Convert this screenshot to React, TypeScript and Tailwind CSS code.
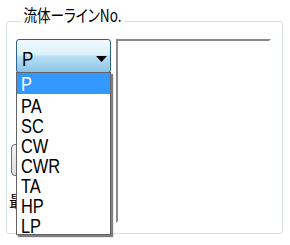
import React from 'react';

const items = ['P', 'PA', 'SC', 'CW', 'CWR', 'TA', 'HP', 'LP'];

export default function App() {
  return (
    <div className="relative h-[245px] w-[290px] overflow-hidden bg-white font-['Liberation_Sans',sans-serif] text-black">
      <div className="pl-[6px] pt-[21px]">
        {/* Group box */}
        <div className="relative h-[213px] w-[277px] rounded-[3px] border border-[#d5dfe5]">
          <span className="absolute left-[14px] top-[-18px] origin-left scale-x-[0.8] bg-white px-[3px] font-['Noto_Sans_CJK_JP',sans-serif] text-[17px] leading-[22px] [font-feature-settings:'palt']">
            流体ーラインNo.
          </span>

          <div className="flex gap-[5px] pl-[2px] pt-[17px]">
            {/* Left column */}
            <div className="relative flex w-[102px] flex-col">
              <div className="ml-[7px] flex h-[34px] w-[95px] items-center justify-between rounded-[3px] border border-[#2c628b] bg-[linear-gradient(to_bottom,#f1f9fe_0%,#dcf0fb_45%,#b8dff5_52%,#8cc5e5_100%)] pl-[5px] pr-[3px] pt-[5px]">
                <span className="inline-block origin-left scale-x-[0.85] text-[20px] leading-[20px]">P</span>
                <svg width="11" height="6" viewBox="0 0 11 6">
                  <path d="M0 0H11L5.5 6Z" fill="#000" />
                </svg>
              </div>

              <div className="ml-[2px] mt-[71px] h-[32px] w-[90px] rounded-[4px] border border-[#707070] bg-[linear-gradient(to_bottom,#f2f2f2,#dddddd)]" />
              <span className="mt-[14px] font-['Noto_Sans_CJK_JP',sans-serif] text-[16px] leading-[20px]">最大</span>

              {/* Dropdown list */}
              <div className="absolute left-[7px] top-[33px] w-[95px] border border-[#646464] bg-white shadow-[2px_2px_1px_rgba(0,0,0,0.5)]">
                {items.map((item, i) => (
                  <div
                    key={item}
                    className={
                      i === 0
                        ? 'h-[21px] bg-[#3399ff] pl-[4px] text-[20px] leading-[22px] text-white'
                        : 'h-[20px] pl-[4px] text-[20px] leading-[24px]'
                    }
                  >
                    <span className="inline-block origin-left scale-x-[0.82]">{item}</span>
                  </div>
                ))}
              </div>
            </div>

            {/* Right list box */}
            <div className="h-[184px] w-[155px] border-2 border-b-white border-l-[#8a8a8a] border-r-white border-t-[#8a8a8a] bg-white" />
          </div>
        </div>
      </div>
    </div>
  );
}
